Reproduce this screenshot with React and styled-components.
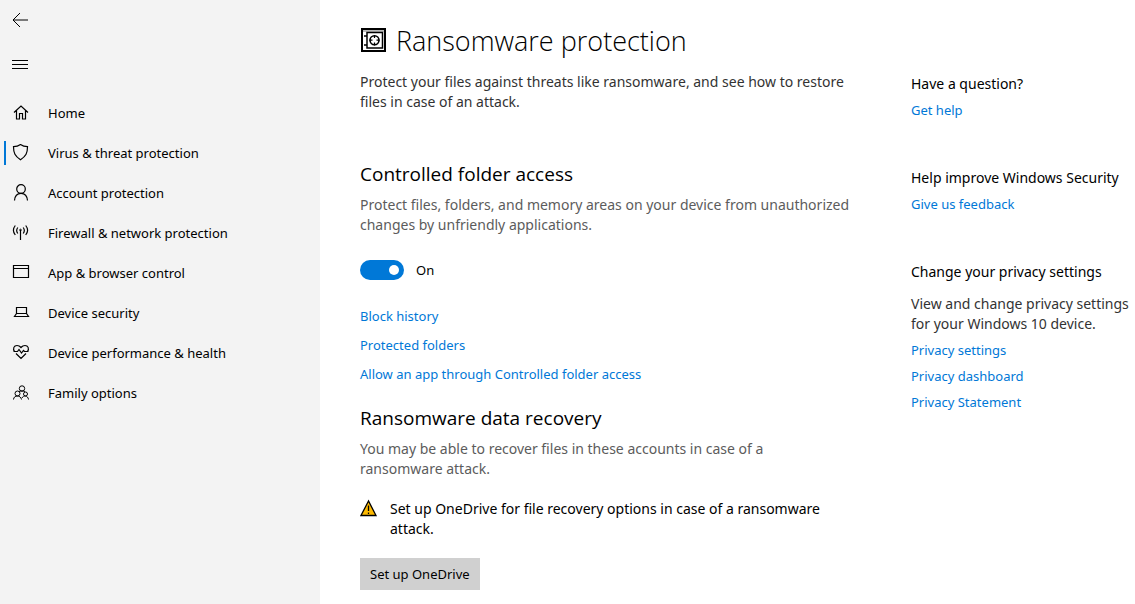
import React, { useState } from "react";
import styled, { createGlobalStyle } from "styled-components";

const GlobalStyle = createGlobalStyle`
  * {
    box-sizing: border-box;
  }

  body {
    margin: 0;
    background: #fff;
    color: #000;
    font-family: "Noto Sans", "Open Sans", sans-serif;
    font-size: 14px;
    line-height: 20px;
  }

  h1, h2, h3, p, ul {
    margin: 0;
    padding: 0;
  }
`;

const Page = styled.div`
  display: flex;
  min-height: 100vh;
`;

const Sidebar = styled.nav`
  flex: 0 0 320px;
  padding-bottom: 16px;
  background: #f3f3f3;
`;

const IconButton = styled.button`
  display: flex;
  align-items: center;
  width: 48px;
  height: 40px;
  padding: 0 0 0 12px;
  border: 0;
  background: none;
  color: inherit;
`;

const MenuButton = styled(IconButton)`
  height: 48px;
  margin-bottom: 5px;
`;

const NavList = styled.ul`
  list-style: none;
`;

const NavLink = styled.a`
  display: flex;
  align-items: center;
  gap: 18px;
  height: 40px;
  padding-left: 4px;
  color: #000;
  font-size: 13px;
  text-decoration: none;

  &::before {
    content: "";
    width: 2px;
    height: 24px;
    margin-right: -12px;
    background: ${(props) => (props.$active ? "#0078d7" : "transparent")};
  }
`;

const Content = styled.div`
  flex: 1;
  display: flex;
  justify-content: space-between;
  gap: 40px;
  min-width: 0;
  padding: 21px 0 14px 40px;
`;

const Main = styled.main`
  flex: 0 1 496px;
`;

const Title = styled.h1`
  display: flex;
  align-items: center;
  gap: 10px;
  height: 40px;
  margin-bottom: 11px;
  font-family: "Open Sans", sans-serif;
  font-size: 27px;
  font-weight: 300;
`;

const Text = styled.p`
  max-width: ${(props) => (props.$narrow ? "484px" : "none")};
  color: ${(props) => (props.$muted ? "#5c5c5c" : "#333")};
`;

const Section = styled.section`
  margin-top: ${(props) => props.$gap}px;
`;

const Heading = styled.h2`
  margin-bottom: 7px;
  font-family: "Open Sans", sans-serif;
  font-size: 19px;
  font-weight: 400;
  line-height: 28px;
`;

const ToggleLabel = styled.label`
  display: flex;
  align-items: center;
  gap: 12px;
  margin: 25px 0 26px;
  font-size: 13px;
`;

const Toggle = styled.input`
  appearance: none;
  display: flex;
  align-items: center;
  justify-content: ${(props) => (props.checked ? "flex-end" : "flex-start")};
  width: 44px;
  height: 20px;
  margin: 0;
  padding: 0 5px;
  border-radius: 10px;
  background: ${(props) => (props.checked ? "#0078d7" : "#999")};

  &::before {
    content: "";
    width: 10px;
    height: 10px;
    border-radius: 50%;
    background: #fff;
  }
`;

const Links = styled.div`
  display: flex;
  flex-direction: column;
  align-items: flex-start;
  gap: ${(props) => props.$gap}px;
`;

const Link = styled.a`
  color: #0078d7;
  font-size: 13px;
  text-decoration: none;
`;

const Warning = styled.div`
  display: flex;
  align-items: flex-start;
  gap: 12px;
  max-width: 484px;
  margin: 20px 0 19px;
`;

const Button = styled.button`
  height: 32px;
  padding: 0 10px;
  border: 0;
  background: #d0d0d0;
  color: #000;
  font-family: inherit;
  font-size: 13px;
`;

const Aside = styled.aside`
  display: flex;
  flex: 0 0 224px;
  flex-direction: column;
  gap: 48px;
  padding-top: 53px;
`;

const AsideHeading = styled.h3`
  margin-bottom: ${(props) => (props.$spaced ? 12 : 6)}px;
  font-size: 14px;
  font-weight: 400;
`;

const AsideText = styled(Text)`
  margin-bottom: 6px;
`;

const Svg = styled.svg`
  flex: none;
  fill: none;
  stroke: currentColor;
  stroke-width: 1;
`;

function Icon({ children, size = 18 }) {
  return (
    <Svg width={size} height={size} viewBox={`0 0 ${size} ${size}`} aria-hidden="true">
      {children}
    </Svg>
  );
}

const navItems = [
  { label: "Home", icon: <path d="M2 8.5 9 2l7 6.500M4.500 6.500v8.500h3V9.500h3V15h3V6.500" strokeWidth="1.2" /> },
  {
    label: "Virus & threat protection",
    active: true,
    icon: <path d="M8.500.5c2 1.500 4.500 2.200 7 2.200 0 6.300-1.500 9.300-7 13-5.500-3.700-7-6.700-7-13C4 2.700 6.500 2 8.500.5Z" strokeWidth="1.2" />,
  },
  {
    label: "Account protection",
    icon: (
      <>
        <circle cx="9" cy="5" r="4.300" strokeWidth="1.200" />
        <path d="M2.500 16.500c.3-4.300 2.700-7.200 6.500-7.200s6.200 2.900 6.500 7.200" strokeWidth="1.200" />
      </>
    ),
  },
  {
    label: "Firewall & network protection",
    icon: (
      <>
        <path d="M3.300 1.500c-2.400 3-2.400 6.500 0 9.500M5.800 3.500c-1.500 2-1.500 4 0 6M13.700 1.500c2.400 3 2.400 6.500 0 9.500M11.200 3.500c1.500 2 1.500 4 0 6M8.500 6v10" strokeWidth="1.200" />
        <circle cx="8.500" cy="6" r=".8" />
      </>
    ),
  },
  { label: "App & browser control", icon: <path d="M1.500 1.500h15v12h-15zM1.500 4.500h15" strokeWidth="1.200" /> },
  { label: "Device security", icon: <path d="M4.500 9.500v-6h10v6M4.500 9.500h10l2 3h-14Z" strokeWidth="1.200" /> },
  {
    label: "Device performance & health",
    icon: (
      <path
        d="M2.500 7.500C.5 4.500 2 1.500 5 1.500c1.800 0 3 .8 4 2 1-1.200 2.200-2 4-2 3 0 4.500 3 2.500 6M4 9.500l5 5 5-5M1.500 7.500h4L7 5.500 9.500 9l2-2.500 1 1h4"
        strokeWidth="1.200"
      />
    ),
  },
  {
    label: "Family options",
    icon: (
      <>
        <circle cx="10" cy="4.500" r="2.700" />
        <circle cx="5.500" cy="9.500" r="2.500" />
        <circle cx="13.500" cy="10" r="2" />
        <path d="M7 7.500c2-.7 4-.7 6 0M1.500 15.500c.3-4.700 7.200-4.700 8 0M10 14c1.200-3 6-2.700 6.500 1.500" />
      </>
    ),
  },
];

function App() {
  const [enabled, setEnabled] = useState(true);

  return (
    <>
      <GlobalStyle />
      <Page>
        <Sidebar>
          <IconButton aria-label="Back">
            <Icon>
              <path d="M16 9H1M8 2 1 9l7 7" />
            </Icon>
          </IconButton>
          <MenuButton aria-label="Menu">
            <Icon>
              <path d="M0 5.500h16M0 9.500h16M0 13.500h16" />
            </Icon>
          </MenuButton>
          <NavList>
            {navItems.map((item) => (
              <li key={item.label}>
                <NavLink href="#" $active={item.active}>
                  <Icon>{item.icon}</Icon>
                  {item.label}
                </NavLink>
              </li>
            ))}
          </NavList>
        </Sidebar>
        <Content>
          <Main>
            <Title>
              <Icon size={26}>
                <path d="M2 3h23" stroke="#bbb" strokeWidth="2" />
                <path d="M2 1h23v22H2z" strokeWidth="2" />
                <path d="M7 4.500h15.500V20H7zM4 8h3M4 17h3" strokeWidth="1.500" />
                <circle cx="14.500" cy="12.200" r="4.500" strokeWidth="1.600" />
                <path d="M14.500 7v3M14.500 14.500v3M9.500 12.200h3M16.500 12.200h3" strokeWidth="1.200" />
              </Icon>
              Ransomware protection
            </Title>
            <Text>
              Protect your files against threats like ransomware, and see how to restore files in
              case of an attack.
            </Text>
            <Section $gap={48}>
              <Heading>Controlled folder access</Heading>
              <Text $muted>
                Protect files, folders, and memory areas on your device from unauthorized changes by
                unfriendly applications.
              </Text>
              <ToggleLabel>
                <Toggle
                  type="checkbox"
                  role="switch"
                  checked={enabled}
                  onChange={() => setEnabled(!enabled)}
                />
                {enabled ? "On" : "Off"}
              </ToggleLabel>
              <Links $gap={9}>
                <Link href="#">Block history</Link>
                <Link href="#">Protected folders</Link>
                <Link href="#">Allow an app through Controlled folder access</Link>
              </Links>
            </Section>
            <Section $gap={20}>
              <Heading>Ransomware data recovery</Heading>
              <Text $muted $narrow>
                You may be able to recover files in these accounts in case of a ransomware attack.
              </Text>
              <Warning>
                <Icon>
                  <path d="M8.500 2 1 16.500h15z" fill="#fdb900" strokeWidth="1.300" />
                  <path d="M8.500 6.500V12M8.500 13.500V15" strokeWidth="1.300" />
                </Icon>
                <p>Set up OneDrive for file recovery options in case of a ransomware attack.</p>
              </Warning>
              <Button>Set up OneDrive</Button>
            </Section>
          </Main>
          <Aside>
            <section>
              <AsideHeading>Have a question?</AsideHeading>
              <Links $gap={6}>
                <Link href="#">Get help</Link>
              </Links>
            </section>
            <section>
              <AsideHeading>Help improve Windows Security</AsideHeading>
              <Links $gap={6}>
                <Link href="#">Give us feedback</Link>
              </Links>
            </section>
            <section>
              <AsideHeading $spaced>Change your privacy settings</AsideHeading>
              <AsideText>View and change privacy settings for your Windows 10 device.</AsideText>
              <Links $gap={6}>
                <Link href="#">Privacy settings</Link>
                <Link href="#">Privacy dashboard</Link>
                <Link href="#">Privacy Statement</Link>
              </Links>
            </section>
          </Aside>
        </Content>
      </Page>
    </>
  );
}

export default App;
